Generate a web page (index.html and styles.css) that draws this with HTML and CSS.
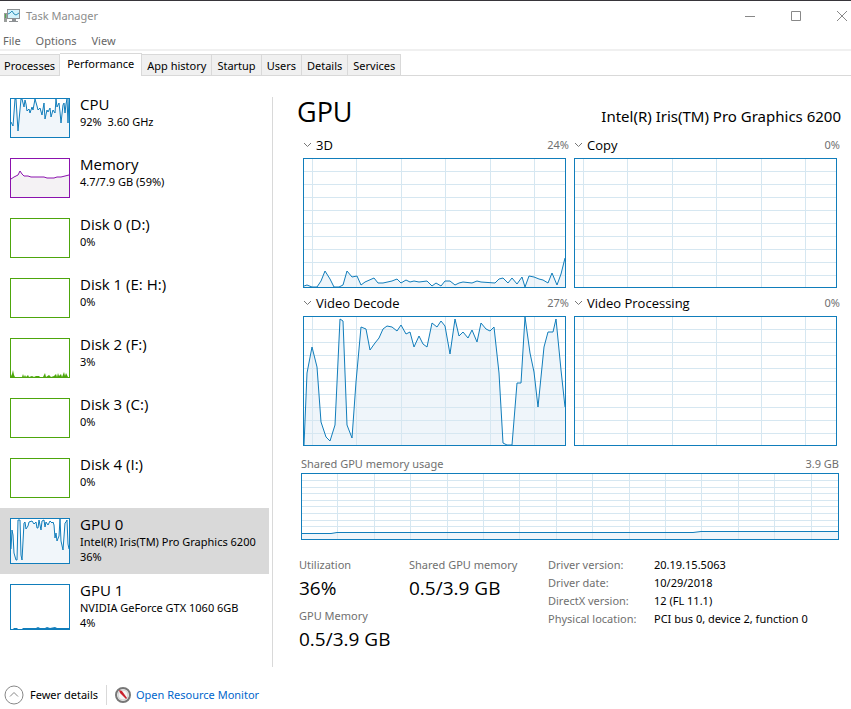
FILE: index.html
```
<!DOCTYPE html>
<html lang="en">
<head>
    <meta charset="UTF-8">
    <meta name="viewport" content="width=device-width, initial-scale=1.0">
    <title>Task Manager</title>
    <link rel="stylesheet" href="styles.css">
</head>
<body>
    <!-- shared grid for the engine charts -->
    <svg class="defs" aria-hidden="true">
        <symbol id="grid" viewBox="0 0 261 128" preserveAspectRatio="none">
            <path d="M8.5 0V128M52.5 0V128M97.5 0V128M141.5 0V128M186.5 0V128M230.5 0V128M0 12.5H261M0 25.5H261M0 38.5H261M0 51.5H261M0 64.5H261M0 77.5H261M0 90.5H261M0 103.5H261M0 116.5H261" />
        </symbol>
    </svg>

    <header class="titlebar">
        <svg class="app-icon" width="16" height="16" viewBox="0 0 16 16">
            <path d="M0 5h3v9H0z" fill="#9a9d9b" />
            <path d="M1 6h1v4H1z" fill="#4faa50" />
            <path d="M3 1h13v10H3z" fill="#8d9194" />
            <path d="M4 2h11v8H4z" fill="#d3f2fb" />
            <path d="M4 6l2-1 2-2 2 3 2 1 3-2" fill="none" stroke="#2b8fb8" />
            <path d="M8 11h4v2H8zM5 13h9v1H5z" fill="#8d9194" />
        </svg>
        <h1 class="app-name">Task Manager</h1>
        <div class="window-buttons">
            <button aria-label="Minimize"><svg width="12" height="12" viewBox="0 0 12 12"><path d="M1 6.5h10" /></svg></button>
            <button aria-label="Maximize"><svg width="12" height="12" viewBox="0 0 12 12"><path d="M1.500 1.500h9v9h-9z" /></svg></button>
            <button aria-label="Close"><svg width="12" height="12" viewBox="0 0 12 12"><path d="M1 1l10 10M11 1L1 11" /></svg></button>
        </div>
    </header>

    <nav class="menu">
        <button>File</button>
        <button>Options</button>
        <button>View</button>
    </nav>

    <div class="tabs" role="tablist">
        <button role="tab">Processes</button>
        <button role="tab" class="active" aria-selected="true">Performance</button>
        <button role="tab">App history</button>
        <button role="tab">Startup</button>
        <button role="tab">Users</button>
        <button role="tab">Details</button>
        <button role="tab">Services</button>
    </div>

    <main class="content">
        <div class="sidebar">
            <button class="item">
                <svg class="thumb blue" viewBox="0 0 58 38">
                    <path class="area" d="M0 38V23L2 27 4 0H5L7 32 10 0H11L13 8 14 1 15 5 16 12 18 10 19 14 21 8 22 11 24 0 26 7 27 11 29 9 31 16 33 4 34 20 36 11 37 13 39 9 40 18 42 11 44 14 45 0 46 8 48 4 49 13 50 24 52 6 53 4 54 14 55 5 56 0 57 24 58 0V38z" />
                    <path class="line" d="M0 23L2 27 4 0H5L7 32 10 0H11L13 8 14 1 15 5 16 12 18 10 19 14 21 8 22 11 24 0 26 7 27 11 29 9 31 16 33 4 34 20 36 11 37 13 39 9 40 18 42 11 44 14 45 0 46 8 48 4 49 13 50 24 52 6 53 4 54 14 55 5 56 0 57 24 58 0" />
                </svg>
                <span class="info"><span class="name">CPU</span><span class="sub">92%&nbsp; 3.60 GHz</span></span>
            </button>
            <button class="item">
                <svg class="thumb purple" viewBox="0 0 58 38">
                    <path class="area" d="M0 38V20L3 18 5 17 7 16 9 12 11 15 13 17 17 17 20 18 33 18 36 19H43L46 18H50L54 17 58 16V38z" />
                    <path class="line" d="M0 20L3 18 5 17 7 16 9 12 11 15 13 17 17 17 20 18 33 18 36 19H43L46 18H50L54 17 58 16" />
                </svg>
                <span class="info"><span class="name">Memory</span><span class="sub">4.7/7.9 GB (59%)</span></span>
            </button>
            <button class="item">
                <svg class="thumb green" viewBox="0 0 58 38"></svg>
                <span class="info"><span class="name">Disk 0 (D:)</span><span class="sub">0%</span></span>
            </button>
            <button class="item">
                <svg class="thumb green" viewBox="0 0 58 38"></svg>
                <span class="info"><span class="name">Disk 1 (E: H:)</span><span class="sub">0%</span></span>
            </button>
            <button class="item">
                <svg class="thumb green" viewBox="0 0 58 38">
                    <path class="solid" d="M0 38V37L1 35 2 31 3 36 4 38H11L12 35 13 38 14 36 15 38 17 36 18 38 21 37 23 38 25 37 28 37 29 38H32L34 34 35 38 38 36 40 38 43 37 45 35 46 38 47 34 48 37 50 35 51 38 53 33 54 37 55 34 57 38z" />
                </svg>
                <span class="info"><span class="name">Disk 2 (F:)</span><span class="sub">3%</span></span>
            </button>
            <button class="item">
                <svg class="thumb green" viewBox="0 0 58 38"></svg>
                <span class="info"><span class="name">Disk 3 (C:)</span><span class="sub">0%</span></span>
            </button>
            <button class="item">
                <svg class="thumb green" viewBox="0 0 58 38"></svg>
                <span class="info"><span class="name">Disk 4 (I:)</span><span class="sub">0%</span></span>
            </button>
            <button class="item selected">
                <svg class="thumb tall blue" viewBox="0 0 58 44">
                    <path class="area" d="M0 44L1 11 2 16 3 34 5 41H6L7 1 9 1 10 36 11 41 13 4 14 3 15 10 17 7 18 3 21 2 23 5 25 3 26 9 27 9 28 1 30 11 31 2 33 1 34 8 35 3 37 6 39 2 41 4 42 3 43 6 44 19 45 14 46 22 48 17 49 0 50 22 52 31 54 4 55 3 56 1 57 25 58 30V44z" />
                    <path class="line" d="M0 30L1 11 2 16 3 34 5 41H6L7 1 9 1 10 36 11 41 13 4 14 3 15 10 17 7 18 3 21 2 23 5 25 3 26 9 27 9 28 1 30 11 31 2 33 1 34 8 35 3 37 6 39 2 41 4 42 3 43 6 44 19 45 14 46 22 48 17 49 0 50 22 52 31 54 4 55 3 56 1 57 25 58 30" />
                </svg>
                <span class="info"><span class="name">GPU 0</span><span class="sub">Intel(R) Iris(TM) Pro Graphics 6200</span><span class="sub">36%</span></span>
            </button>
            <button class="item">
                <svg class="thumb tall blue" viewBox="0 0 58 44">
                    <path class="solid" d="M2 44L3 43H6L7 44H11L12 43H25L27 42 29 43 34 43 36 42 39 43 44 42 46 43H58V44z" />
                </svg>
                <span class="info"><span class="name">GPU 1</span><span class="sub">NVIDIA GeForce GTX 1060 6GB</span><span class="sub">4%</span></span>
            </button>
        </div>

        <section class="details">
            <div class="heading">
                <h2>GPU</h2>
                <p>Intel(R) Iris(TM) Pro Graphics 6200</p>
            </div>

            <div class="engines">
                <div class="engine">
                    <div class="engine-head">
                        <button><svg width="9" height="6" viewBox="0 0 9 6"><path d="M1 1l3.500 3.500L8 1" /></svg>3D</button>
                        <span>24%</span>
                    </div>
                    <svg class="chart" viewBox="0 0 261 128" preserveAspectRatio="none">
                        <path class="area" d="M0 128V127L3 126 8 128 13 128 17 122 21 112 26 120 30 128 35 128 39 126 43 112 48 118 53 117 57 126 61 123 70 119 74 124 79 124 88 122 93 120 97 124 102 121 106 123 110 122 115 123 123 122 128 127 132 124 137 127 141 122 146 122 151 126 155 124 159 123 168 124 173 122 177 123 191 124 195 120 199 119 204 124 208 119 213 125 218 118 221 128 225 117 230 118 235 120 239 121 244 124 248 114 253 126 257 115 261 99V128z" />
                        <use class="grid" href="#grid" />
                        <path class="line" d="M0 127L3 126 8 128 13 128 17 122 21 112 26 120 30 128 35 128 39 126 43 112 48 118 53 117 57 126 61 123 70 119 74 124 79 124 88 122 93 120 97 124 102 121 106 123 110 122 115 123 123 122 128 127 132 124 137 127 141 122 146 122 151 126 155 124 159 123 168 124 173 122 177 123 191 124 195 120 199 119 204 124 208 119 213 125 218 118 221 128 225 117 230 118 235 120 239 121 244 124 248 114 253 126 257 115 261 99" />
                    </svg>
                </div>
                <div class="engine">
                    <div class="engine-head">
                        <button><svg width="9" height="6" viewBox="0 0 9 6"><path d="M1 1l3.500 3.500L8 1" /></svg>Copy</button>
                        <span>0%</span>
                    </div>
                    <svg class="chart" viewBox="0 0 261 128" preserveAspectRatio="none">
                        <use class="grid" href="#grid" />
                    </svg>
                </div>
                <div class="engine">
                    <div class="engine-head">
                        <button><svg width="9" height="6" viewBox="0 0 9 6"><path d="M1 1l3.500 3.500L8 1" /></svg>Video Decode</button>
                        <span>27%</span>
                    </div>
                    <svg class="chart" viewBox="0 0 261 128" preserveAspectRatio="none">
                        <path class="area" d="M0 128L3 56 8 30 13 50 17 105 22 120 26 124 31 108 36 2 39 4 43 108 48 121 52 65 57 10 62 12 66 33 71 26 75 21 79 12 83 9 88 10 93 14 97 8 102 17 106 15 110 30 115 19 119 27 123 30 128 6 133 10 137 4 141 9 146 37 151 2 155 19 159 15 164 21 168 13 173 25 177 6 182 12 186 14 190 10 195 56 199 126 203 128 208 128 213 66 217 66 221 0 226 36 230 55 234 90 240 30 244 15 249 15 252 2 257 53 261 90V128z" />
                        <use class="grid" href="#grid" />
                        <path class="line" d="M0 128L3 56 8 30 13 50 17 105 22 120 26 124 31 108 36 2 39 4 43 108 48 121 52 65 57 10 62 12 66 33 71 26 75 21 79 12 83 9 88 10 93 14 97 8 102 17 106 15 110 30 115 19 119 27 123 30 128 6 133 10 137 4 141 9 146 37 151 2 155 19 159 15 164 21 168 13 173 25 177 6 182 12 186 14 190 10 195 56 199 126 203 128 208 128 213 66 217 66 221 0 226 36 230 55 234 90 240 30 244 15 249 15 252 2 257 53 261 90" />
                    </svg>
                </div>
                <div class="engine">
                    <div class="engine-head">
                        <button><svg width="9" height="6" viewBox="0 0 9 6"><path d="M1 1l3.500 3.500L8 1" /></svg>Video Processing</button>
                        <span>0%</span>
                    </div>
                    <svg class="chart" viewBox="0 0 261 128" preserveAspectRatio="none">
                        <use class="grid" href="#grid" />
                    </svg>
                </div>
            </div>

            <div class="memory">
                <div class="memory-head"><span>Shared GPU memory usage</span><span>3.9 GB</span></div>
                <svg class="chart short" viewBox="0 0 536 65" preserveAspectRatio="none">
                    <path class="area" d="M0 65V59.500H29L35 58.500H391L399 57.500H536V65z" />
                    <path class="grid" d="M35.500 0V65M72.500 0V65M108.500 0V65M145.500 0V65M181.500 0V65M217.500 0V65M254.500 0V65M290.500 0V65M327.500 0V65M363.500 0V65M399.500 0V65M436.500 0V65M472.500 0V65M509.500 0V65M0 6.500H536M0 13.500H536M0 19.500H536M0 26.500H536M0 32.500H536M0 39.500H536M0 46.500H536M0 52.500H536" />
                    <path class="line" d="M0 59.500H29L35 58.500H391L399 57.500H536" />
                </svg>
            </div>

            <div class="stats">
                <dl class="stat"><dt>Utilization</dt><dd>36%</dd></dl>
                <dl class="stat"><dt>Shared GPU memory</dt><dd>0.5/3.9 GB</dd></dl>
                <dl class="stat"><dt>GPU Memory</dt><dd>0.5/3.9 GB</dd></dl>
                <table class="driver">
                    <tr><th scope="row">Driver version:</th><td>20.19.15.5063</td></tr>
                    <tr><th scope="row">Driver date:</th><td>10/29/2018</td></tr>
                    <tr><th scope="row">DirectX version:</th><td>12 (FL 11.1)</td></tr>
                    <tr><th scope="row">Physical location:</th><td>PCI bus 0, device 2, function 0</td></tr>
                </table>
            </div>
        </section>
    </main>

    <footer class="footer">
        <button class="fewer">
            <svg width="20" height="20" viewBox="0 0 20 20"><circle cx="10" cy="10" r="9" /><path d="M6 11.500l4-4 4 4" /></svg>
            Fewer details
        </button>
        <a class="monitor" href="#">
            <svg width="16" height="16" viewBox="0 0 16 16">
                <circle cx="8" cy="8" r="7" fill="#f4f4f4" stroke="#777" stroke-width="2" />
                <circle cx="8" cy="8" r="5" fill="none" stroke="#ccc" />
                <path d="M4 3l3 1 5 7-1 1-6-6z" fill="#c8202c" />
            </svg>
            Open Resource Monitor
        </a>
    </footer>
</body>
</html>
```
FILE: styles.css
```
* {
    margin: 0;
    padding: 0;
    box-sizing: border-box;
}
body {
    display: flex;
    flex-direction: column;
    min-height: 100vh;
    border-top: 1px solid #37353a;
    background-color: #fff;
    color: #000;
    font-family: "Segoe UI", "Noto Sans", "Open Sans", sans-serif;
    font-size: 11px;
    line-height: 16px;
}
button {
    border: none;
    background: none;
    color: inherit;
    font: inherit;
    text-align: left;
    white-space: nowrap;
}
svg {
    display: block;
    flex: none;
}
.defs {
    position: absolute;
    width: 0;
    height: 0;
}

/* title bar and menu */
.titlebar {
    display: flex;
    align-items: center;
    height: 30px;
    padding-left: 4px;
    gap: 6px;
    color: #8c8c8c;
}
.app-name {
    font-size: 11px;
    font-weight: 400;
}
.window-buttons {
    display: flex;
    margin-left: auto;
    padding-right: 3px;
    gap: 34px;
}
.window-buttons path {
    fill: none;
    stroke: #888;
}
.menu {
    display: flex;
    height: 20px;
    padding: 1px 3px 0;
    gap: 15px;
    border-bottom: 2px solid #f0f0f0;
    color: #666;
}
.tabs {
    display: flex;
    align-items: flex-end;
    height: 25px;
    border-bottom: 1px solid #d9d9d9;
}
.tabs button {
    height: 21px;
    padding: 1px 5px 0;
    border: 1px solid #d9d9d9;
    border-left: none;
    border-bottom: none;
    background-color: #f0f0f0;
}
.tabs button:first-child {
    padding: 1px 4px 0;
}
.tabs .active {
    height: 23px;
    margin-bottom: -1px;
    padding: 0 7px 3px;
    background-color: #fff;
}

/* left list */
.content {
    display: flex;
    flex: 1;
}
.sidebar {
    flex: none;
    width: 269px;
    padding-top: 12px;
}
.item {
    display: flex;
    width: 100%;
    padding: 10px;
    gap: 10px;
}
.selected {
    background-color: #d9d9d9;
}
.thumb {
    width: 60px;
    height: 40px;
    border: 1px solid;
    background-color: #fff;
}
.tall {
    height: 46px;
}
.blue {
    color: #117dbb;
}
.purple {
    color: #8b12ae;
}
.green {
    color: #4da60c;
}
.thumb .line {
    fill: none;
    stroke: currentColor;
}
.thumb .solid {
    fill: currentColor;
}
.thumb .area {
    fill: #f1f6fa;
}
.purple .area {
    fill: #f4f2f4;
}
.info {
    display: flex;
    flex-direction: column;
    margin-top: -4px;
}
.name {
    font-family: "Segoe UI", "Open Sans", sans-serif;
    font-size: 15px;
    line-height: 20px;
}
.sub {
    line-height: 15px;
}

/* right pane */
.details {
    flex: 1;
    margin: 21px 0 0 3px;
    padding: 0 10px 0 24px;
    border-left: 1px solid #d9d9d9;
}
.heading {
    display: flex;
    justify-content: space-between;
    align-items: baseline;
    height: 40px;
}
.heading h2 {
    font-family: "Segoe UI", "Open Sans", sans-serif;
    font-size: 27px;
    font-weight: 400;
    line-height: 30px;
}
.heading p {
    font-size: 15px;
}
.engines {
    display: grid;
    grid-template-columns: 1fr 1fr;
    gap: 7px 8px;
    margin: 0 4px 0 6px;
}
.engine-head {
    display: flex;
    justify-content: space-between;
    height: 21px;
    margin-right: -3px;
    color: #707070;
}
.engine-head button {
    display: flex;
    align-items: center;
    height: 16px;
    gap: 4px;
    color: #000;
    font-family: "Segoe UI", "Open Sans", sans-serif;
    font-size: 13px;
}
.engine-head path {
    fill: none;
    stroke: #777;
}
.chart {
    width: 100%;
    height: 130px;
    border: 1px solid #117dbb;
}
.short {
    height: 67px;
}
.chart .area {
    fill: #eff5fa;
}
.grid {
    fill: none;
    stroke: #d6e7f1;
    shape-rendering: crispEdges;
}
.chart .line {
    fill: none;
    stroke: #117dbb;
}
.memory {
    margin: 10px 2px 0 4px;
}
.memory-head {
    display: flex;
    justify-content: space-between;
    height: 17px;
    color: #707070;
}
.stats {
    display: grid;
    grid-template-columns: 110px 139px 1fr;
    grid-auto-rows: 51px;
    margin: 17px 0 0 2px;
}
.stat dt {
    color: #707070;
    white-space: nowrap;
}
.stat dd {
    font-family: "Segoe UI", "Open Sans", sans-serif;
    font-size: 19px;
    line-height: 30px;
}
.driver {
    grid-column: 3;
    grid-row: 1 / span 2;
    align-self: start;
    border-spacing: 0;
}
.driver th,
.driver td {
    height: 18px;
    font-weight: 400;
    text-align: left;
    white-space: nowrap;
    vertical-align: top;
}
.driver th {
    width: 106px;
    color: #707070;
}

/* bottom bar */
.footer {
    display: flex;
    align-items: center;
    height: 28px;
    margin-top: 14px;
    padding: 0 4px;
}
.fewer {
    display: flex;
    align-items: center;
    gap: 6px;
    padding-right: 8px;
    border-right: 1px solid #d9d9d9;
}
.fewer svg {
    fill: none;
    stroke: #888;
}
.monitor {
    display: flex;
    align-items: center;
    gap: 5px;
    padding-left: 8px;
    color: #0066cc;
    text-decoration: none;
}
```
